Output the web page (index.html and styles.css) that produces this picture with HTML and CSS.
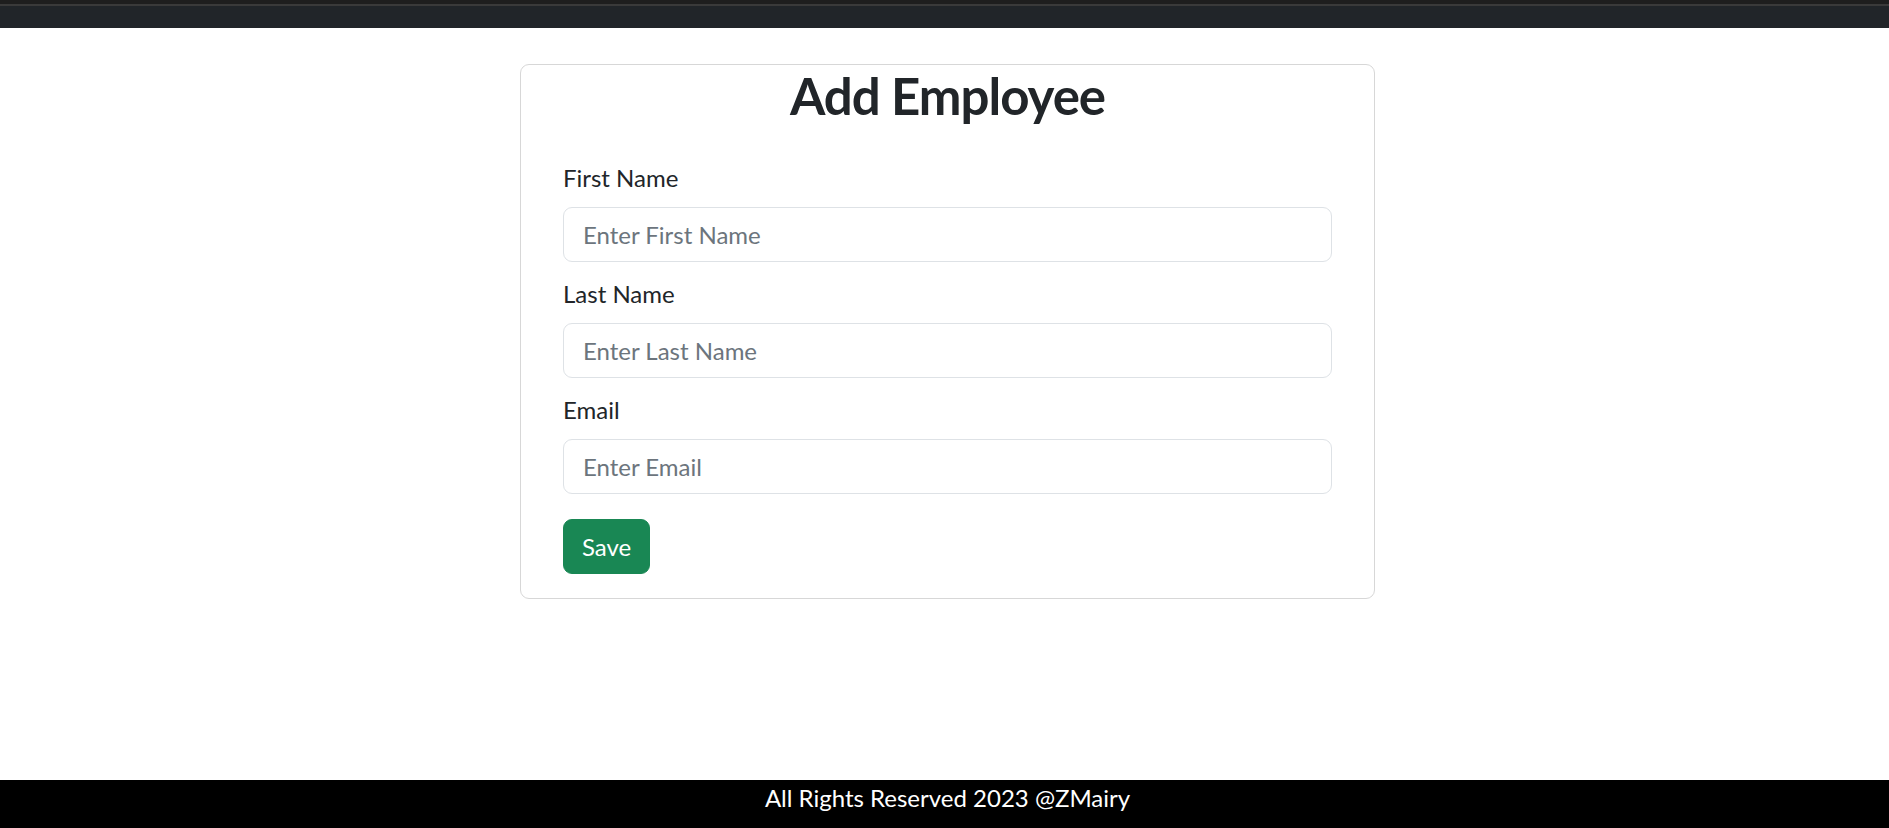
FILE: index.html
```html
<!DOCTYPE html>
<html lang="en">
<head>
<meta charset="utf-8">
<title>Add Employee</title>
<link rel="stylesheet" href="styles.css">
</head>
<body>
<header class="navbar"></header>
<main class="page">
  <div class="card">
    <h2 class="card-title">Add Employee</h2>
    <form class="card-body">
      <div class="form-group">
        <label class="form-label">First Name</label>
        <input class="form-control" type="text" placeholder="Enter First Name">
      </div>
      <div class="form-group">
        <label class="form-label">Last Name</label>
        <input class="form-control" type="text" placeholder="Enter Last Name">
      </div>
      <div class="form-group">
        <label class="form-label">Email</label>
        <input class="form-control" type="text" placeholder="Enter Email">
      </div>
      <button class="btn-save" type="button">Save</button>
    </form>
  </div>
</main>
<footer class="footer">
  <span class="footer-text">All Rights Reserved 2023 @ZMairy</span>
</footer>
</body>
</html>
```
FILE: styles.css
```css
html, body {
  margin: 0;
  padding: 0;
}
body {
  min-height: 100vh;
  display: flex;
  flex-direction: column;
  font-family: "Lato", "Noto Sans", sans-serif;
  font-size: 24px;
  line-height: 36px;
  color: #212529;
  background: #fff;
}
.navbar {
  height: 24px;
  background: #212529;
  border-top: 4px solid #1e1e1e;
  box-shadow: inset 0 2px 0 #3a3a3a;
  flex: none;
}
.page {
  flex: 1;
  display: flex;
  justify-content: center;
  align-items: flex-start;
  padding-left: 6px;
  padding-top: 36px;
}
.card {
  width: 855px;
  box-sizing: border-box;
  border: 1px solid #d7d7d7;
  border-radius: 9px;
  background: #fff;
}
.card-title {
  margin: 0;
  text-align: center;
  font-size: 51px;
  line-height: 61px;
  font-weight: 700;
  letter-spacing: -1px;
  color: #212529;
}
.card-body {
  display: flex;
  flex-direction: column;
  align-items: flex-start;
  padding: 34px 42px 24px;
}
.form-group {
  align-self: stretch;
  display: flex;
  flex-direction: column;
  margin-bottom: 14px;
}
.form-label {
  display: block;
  margin-bottom: 11px;
  line-height: 36px;
}
.form-control {
  box-sizing: border-box;
  height: 55px;
  width: 100%;
  padding: 0 19px;
  font-family: inherit;
  font-size: 24px;
  line-height: 36px;
  color: #212529;
  border: 1px solid #dee2e6;
  border-radius: 9px;
  background: #fff;
  outline: none;
}
.form-control::placeholder {
  color: #6c757d;
  opacity: 1;
}
.btn-save {
  margin-top: 11px;
  height: 55px;
  width: 87px;
  padding: 0;
  font-family: inherit;
  font-size: 24px;
  line-height: 36px;
  color: #fff;
  background: #198754;
  border: 1px solid #198754;
  border-radius: 9px;
  cursor: pointer;
}
.footer {
  flex: none;
  height: 48px;
  box-sizing: border-box;
  background: #000;
  color: #fff;
  text-align: center;
  padding-left: 6px;
  line-height: 36px;
}
```
